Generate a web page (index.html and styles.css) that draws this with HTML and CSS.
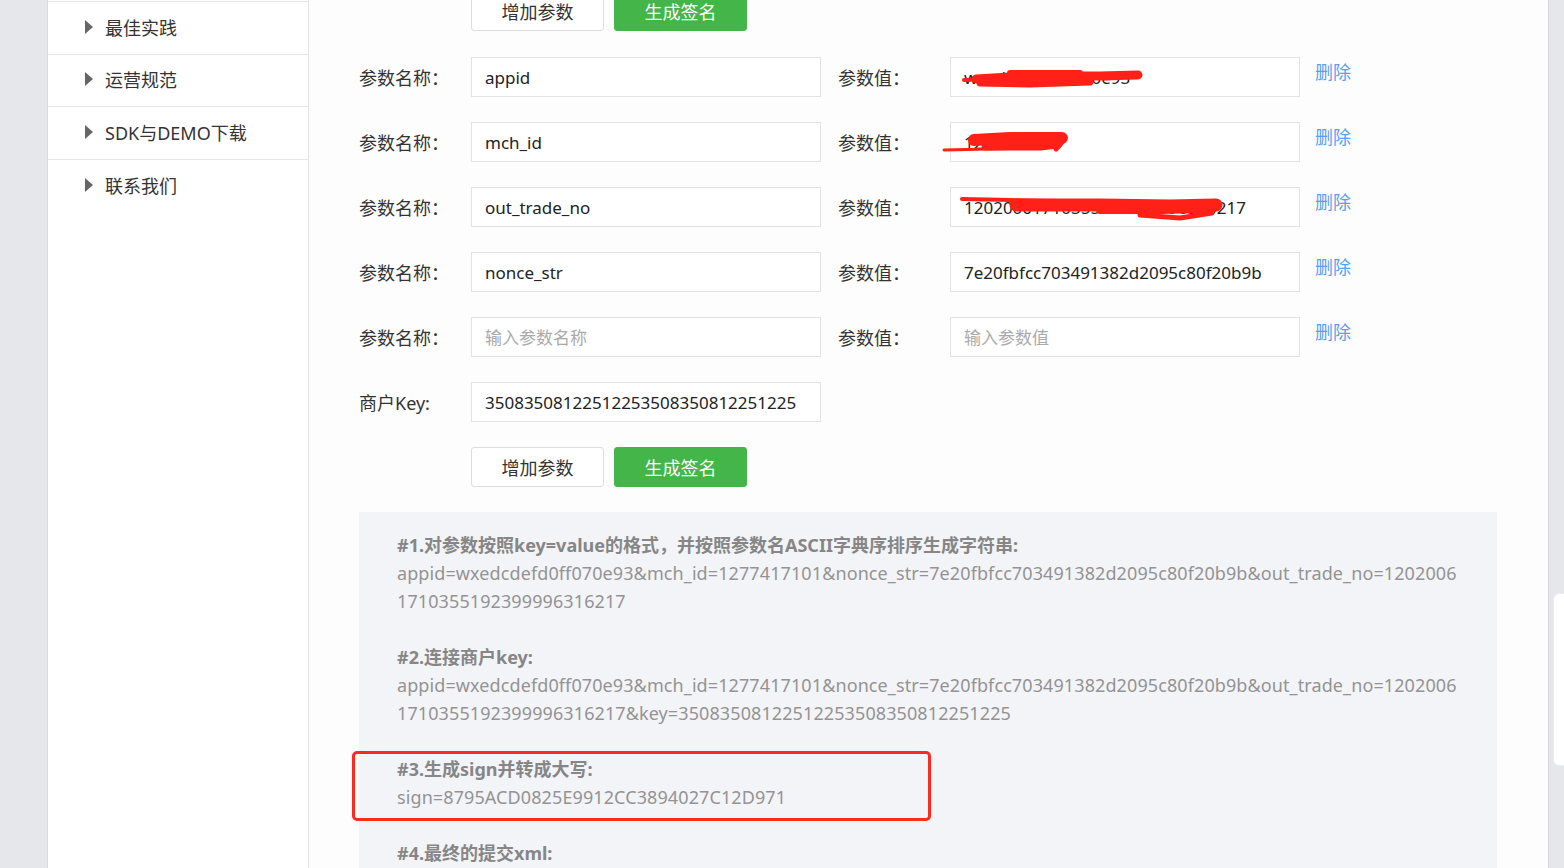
FILE: index.html
```html
<!DOCTYPE html>
<html lang="zh-CN">
<head>
  <meta charset="UTF-8" />
  <title>签名校验工具</title>
  <link rel="stylesheet" href="styles.css">
</head>
<body>
  <div class="page">
    <div class="gutter"></div>

    <!-- Sidebar -->
    <aside class="sidebar">
      <ul class="nav">
        <li><span class="caret"></span>最佳实践</li>
        <li><span class="caret"></span>运营规范</li>
        <li><span class="caret"></span>SDK与DEMO下载</li>
        <li><span class="caret"></span>联系我们</li>
      </ul>
    </aside>

    <!-- Main -->
    <main class="main">
      <div class="btns btns-top">
        <button class="btn">增加参数</button>
        <button class="btn btn-green">生成签名</button>
      </div>

      <div class="row">
        <span class="label">参数名称：</span>
        <input class="input" type="text" value="appid" />
        <span class="label label-val">参数值：</span>
        <span class="val">
          <input class="input" type="text" value="wxedcdefd0ff070e93" />
          <svg class="redact" width="350" height="40" viewBox="0 0 350 40">
            <path d="M26 22 L60 20 L100 19 L150 19 L188 18" />
            <path d="M30 26 L80 27 L140 25" stroke-width="7" />
            <path d="M14 23 L40 22" stroke-width="4" />
            <path d="M60 16 L130 16" stroke-width="6" />
          </svg>
        </span>
        <a class="del" href="#">删除</a>
      </div>

      <div class="row">
        <span class="label">参数名称：</span>
        <input class="input" type="text" value="mch_id" />
        <span class="label label-val">参数值：</span>
        <span class="val">
          <input class="input" type="text" value="1277417101" />
          <svg class="redact" width="350" height="40" viewBox="0 0 350 40">
            <path d="M24 18 L60 16 L112 16" stroke-width="12" />
            <path d="M36 24 L90 24 L108 22" stroke-width="9" />
            <path d="M-6 28 L40 27 L72 26" stroke-width="3" />
            <path d="M104 13 L112 20 L106 27" stroke-width="5" />
          </svg>
        </span>
        <a class="del" href="#">删除</a>
      </div>

      <div class="row">
        <span class="label">参数名称：</span>
        <input class="input" type="text" value="out_trade_no" />
        <span class="label label-val">参数值：</span>
        <span class="val">
          <input class="input" type="text" value="12020061710355192399996316217" />
          <svg class="redact" width="350" height="40" viewBox="0 0 350 40">
            <path d="M12 12 L60 13 L100 14" stroke-width="4" />
            <path d="M66 18 L150 18 L220 19 L266 18" stroke-width="13" />
            <path d="M150 23 L210 23 L258 22" stroke-width="8" />
            <path d="M190 28 L230 31 L262 26" stroke-width="5" />
          </svg>
        </span>
        <a class="del" href="#">删除</a>
      </div>

      <div class="row">
        <span class="label">参数名称：</span>
        <input class="input" type="text" value="nonce_str" />
        <span class="label label-val">参数值：</span>
        <input class="input" type="text" value="7e20fbfcc703491382d2095c80f20b9b" />
        <a class="del" href="#">删除</a>
      </div>

      <div class="row">
        <span class="label">参数名称：</span>
        <input class="input" type="text" placeholder="输入参数名称" />
        <span class="label label-val">参数值：</span>
        <input class="input" type="text" placeholder="输入参数值" />
        <a class="del" href="#">删除</a>
      </div>

      <div class="row">
        <span class="label">商户Key:</span>
        <input class="input" type="text" value="35083508122512253508350812251225" />
      </div>

      <div class="btns">
        <button class="btn">增加参数</button>
        <button class="btn btn-green">生成签名</button>
      </div>

      <!-- Result -->
      <div class="result">
        <div class="step">
          <h4>#1.对参数按照key=value的格式，并按照参数名ASCII字典序排序生成字符串:</h4>
          <p>appid=wxedcdefd0ff070e93&amp;mch_id=1277417101&amp;nonce_str=7e20fbfcc703491382d2095c80f20b9b&amp;out_trade_no=12020061710355192399996316217</p>
        </div>
        <div class="step">
          <h4>#2.连接商户key:</h4>
          <p>appid=wxedcdefd0ff070e93&amp;mch_id=1277417101&amp;nonce_str=7e20fbfcc703491382d2095c80f20b9b&amp;out_trade_no=12020061710355192399996316217&amp;key=35083508122512253508350812251225</p>
        </div>
        <div class="step">
          <div class="mark"></div>
          <h4>#3.生成sign并转成大写:</h4>
          <p>sign=8795ACD0825E9912CC3894027C12D971</p>
        </div>
        <div class="step">
          <h4>#4.最终的提交xml:</h4>
        </div>
      </div>
    </main>

    <div class="rail"><div class="rail-tab"></div></div>
  </div>
</body>
</html>
```

FILE: styles.css
```css
/* Reset & Body */
* { box-sizing: border-box; }
html, body { height: 100%; }
body {
  margin: 0;
  overflow: hidden;
  font-family: 'Noto Sans', 'Noto Sans CJK SC', sans-serif;
  color: #333;
  background: #e6e7eb;
}
.page { display: flex; height: 100vh; }
.gutter { width: 47px; flex: none; }

/* Sidebar */
.sidebar {
  width: 262px; flex: none;
  background: #fff;
  border-left: 1px solid #dadbe0;
  border-right: 1px solid #e3e3e3;
}
.nav { list-style: none; margin: 1px 0 0; padding: 0; border-top: 1px solid #e6e6e6; }
.nav li {
  height: 52.5px;
  display: flex; align-items: center;
  padding-left: 37px;
  padding-bottom: 2px;
  border-bottom: 1px solid #e6e6e6;
  font-size: 18px;
}
.nav li:last-child { border-bottom: 0; }
.caret {
  width: 0; height: 0;
  border-left: 8px solid #666;
  border-top: 7px solid transparent;
  border-bottom: 7px solid transparent;
  margin-right: 12px;
}

/* Main */
.main {
  flex: 1;
  background: #fdfdfd;
  border-right: 1px solid #d6d7db;
  padding-left: 50px;
}
.btns { display: flex; gap: 10px; margin-left: 112px; margin-bottom: 25px; }
.btns-top { margin-top: -9px; margin-bottom: 26px; }
.btn {
  width: 133px; height: 40px;
  border: 1px solid #ddd;
  border-radius: 3px;
  background: #fff;
  font-family: inherit;
  font-size: 18px;
  color: #333;
}
.btn-green { background: #44b549; border-color: #44b549; color: #fff; }

.row { display: flex; align-items: center; height: 40px; margin-bottom: 25px; }
.label { width: 112px; flex: none; font-size: 18px; }
.label-val { margin-left: 17px; }
.input {
  width: 350px; height: 40px;
  border: 1px solid #e2e2e2;
  background: #fff;
  padding: 0 13px;
  font-family: inherit;
  font-size: 17px;
  color: #222;
  outline: none;
}
.input::placeholder { color: #aaa; }
.val { position: relative; display: block; height: 40px; }
.redact {
  position: absolute; left: 0; top: 0;
  overflow: visible;
  pointer-events: none;
  fill: none;
  stroke: #ff2118;
  stroke-width: 9;
  stroke-linecap: round;
  stroke-linejoin: round;
}
.del {
  margin-left: 15px;
  align-self: flex-start;
  margin-top: 3px;
  line-height: 24px;
  font-size: 18px;
  color: #5b9ef0;
  text-decoration: none;
}

/* Result panel */
.result {
  width: 1138px;
  background: #f3f4f8;
  padding: 19px 38px;
  color: #939393;
  font-size: 18px;
  line-height: 28px;
}
.step { position: relative; margin-bottom: 28px; }
.step h4 { margin: 0; font-size: 18px; font-weight: bold; color: #868686; }
.step p { margin: 0; word-break: break-all; letter-spacing: 0.1px; }
.mark {
  position: absolute;
  top: -4px; left: -45px;
  width: 579px; height: 70px;
  border: 3px solid #ff2a1f;
  border-radius: 5px;
}

/* Right rail */
.rail { width: 15px; flex: none; padding-top: 593px; }
.rail-tab {
  margin-left: 4px;
  height: 173px;
  background: #fff;
  border: 1px solid #ececef;
  border-right: 0;
  border-radius: 6px 0 0 6px;
}
```
